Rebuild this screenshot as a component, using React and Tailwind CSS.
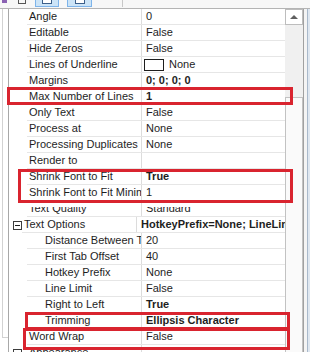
import React from "react";

const ROWS = [
  { name: "Angle", value: "0" },
  { name: "Editable", value: "False" },
  { name: "Hide Zeros", value: "False" },
  { name: "Lines of Underline", value: "None", swatch: true },
  { name: "Margins", value: "0; 0; 0; 0", bold: true },
  { name: "Max Number of Lines", value: "1", bold: true },
  { name: "Only Text", value: "False" },
  { name: "Process at", value: "None" },
  { name: "Processing Duplicates", value: "None" },
  { name: "Render to", value: "" },
  { name: "Shrink Font to Fit", value: "True", bold: true },
  { name: "Shrink Font to Fit Minimum Size", value: "1" },
  { name: "Text Quality", value: "Standard", clipTop: true },
  { name: "Text Options", value: "HotkeyPrefix=None; LineLimit=False", bold: true, category: true },
  { name: "Distance Between Tab Stops", value: "20", indent: true },
  { name: "First Tab Offset", value: "40", indent: true },
  { name: "Hotkey Prefix", value: "None", indent: true },
  { name: "Line Limit", value: "False", indent: true },
  { name: "Right to Left", value: "True", bold: true, indent: true },
  { name: "Trimming", value: "Ellipsis Character", bold: true, indent: true },
  { name: "Word Wrap", value: "False" },
  { name: "Appearance", value: "", category: true },
];

// red annotation rectangles drawn over the grid
const MARKS = [
  "left-[7px] top-[87px] w-[286px] h-[18px]",
  "left-[18px] top-[169px] w-[275px] h-[34px]",
  "left-[25px] top-[312px] w-[265px] h-[18px]",
  "left-[23px] top-[328px] w-[267px] h-[22px]",
];

function Row({ row }) {
  return (
    <div className="flex h-[16px] shrink-0">
      <div className="w-[18px] flex items-center pl-[4px]">
        {row.category && (
          <div className="w-[9px] h-[9px] border border-[#3c3c3c] flex items-center justify-center bg-white">
            <div className="w-[5px] h-px bg-[#1e1e1e]" />
          </div>
        )}
      </div>
      <div className="flex flex-1 border-b border-[#e6e6e6]">
        <div
          className={`w-[115px] border-r border-[#dcdcdc] overflow-hidden whitespace-nowrap ${
            row.indent ? "pl-[18px]" : "pl-[2px]"
          } ${row.clipTop ? "pt-[6px]" : ""}`}
        >
          <div className={row.clipTop ? "h-[9px] overflow-hidden" : ""}>
            <div className={`leading-[15px] ${row.clipTop ? "-mt-[6px]" : ""}`}>
              {row.name}
            </div>
          </div>
        </div>
        <div
          className={`flex-1 flex items-center overflow-hidden whitespace-nowrap pl-[4px] ${
            row.bold ? "font-bold" : ""
          } ${row.clipTop ? "pt-[6px]" : ""}`}
        >
          {row.swatch && (
            <div className="w-[20px] h-[12px] border border-[#1e1e1e] bg-white mr-[5px] -ml-[2px] shrink-0" />
          )}
          <div className={row.clipTop ? "h-[9px] overflow-hidden self-start" : ""}>
            <div className={`leading-[15px] ${row.clipTop ? "-mt-[6px]" : ""}`}>
              {row.value}
            </div>
          </div>
        </div>
      </div>
    </div>
  );
}

export default function App() {
  return (
    <div className="relative w-[310px] h-[352px] overflow-hidden bg-white font-['Liberation_Sans',Arial,sans-serif] text-[11px] text-[#1e1e1e]">
      {/* toolbar, only the lower edge is visible */}
      <div className="relative h-[8px] flex bg-[#f7f7f7]">
        <div className="w-[5px] h-[3px] ml-[2px] bg-[#8b62b3]" />
        <div className="w-[8px] h-[4px] ml-[11px] border-x border-b border-[#555]" />
        <div className="w-[24px] h-[7px] ml-[9px] border-x border-b border-[#7eb4ea] bg-[#cce4f7] flex justify-center">
          <div className="w-[10px] h-[4px] border-x border-b border-[#3b5f8a] bg-white" />
        </div>
        <div className="w-[25px] h-[7px] ml-[8px] border-x border-b border-[#7eb4ea] bg-[#cce4f7] flex justify-center">
          <div className="w-[10px] h-[4px] border-x border-b border-[#3b5f8a] bg-white" />
        </div>
        <div className="w-px h-[7px] ml-[30px] bg-[#c8c8c8]" />
      </div>

      <div className="flex h-[344px] border-t border-[#b4b4b4]">
        {/* neighbouring panel edge */}
        <div className="w-[8px] pl-[2px]">
          <div className="h-[329px] border-l border-b border-[#d2d2d2]" />
        </div>

        {/* property grid */}
        <div className="w-[277px] border-l border-[#a8a8a8] flex flex-col overflow-hidden">
          {ROWS.map((row) => (
            <Row key={row.name} row={row} />
          ))}
        </div>

        {/* scrollbar */}
        <div className="w-[18px] bg-[#f0f0f0] flex flex-col">
          <div className="h-[16px] border border-[#bdbdbd] bg-white flex items-center justify-center">
            <div className="w-0 h-0 border-x-[4px] border-x-transparent border-b-[4px] border-b-[#606060]" />
          </div>
          <div className="h-[72px]" />
          <div className="flex-1 border border-[#c2c2c2] border-b-0 bg-[#fafafa]" />
        </div>

        {/* outer frame */}
        <div className="w-[7px] flex">
          <div className="w-px bg-[#a0a0a0]" />
          <div className="w-[3px] bg-[#f4f4f4]" />
          <div className="w-px bg-[#a9b9cb]" />
          <div className="flex-1 bg-[#dfe7f0]" />
        </div>
      </div>

      {MARKS.map((m) => (
        <div key={m} className={`absolute ${m} border-[3px] border-[#d9242f]`} />
      ))}
    </div>
  );
}
